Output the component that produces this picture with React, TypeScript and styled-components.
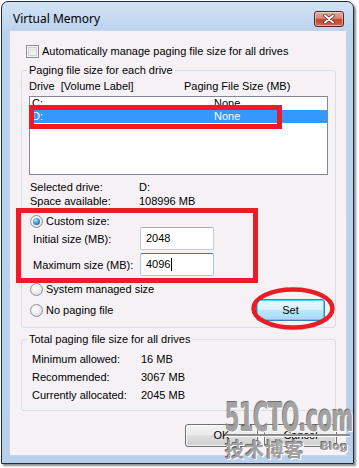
import React from 'react';
import styled, { createGlobalStyle, css } from 'styled-components';

const GlobalStyle = createGlobalStyle`
  html, body {
    margin: 0;
    padding: 0;
    background: #ffffff;
  }
  body {
    font-family: "Liberation Sans", Arial, sans-serif;
    font-size: 11px;
    color: #000000;
  }
`;

const Page = styled.div`
  position: relative;
  width: 359px;
  height: 468px;
  box-sizing: border-box;
  padding: 1px 0 0 1px;
  overflow: hidden;
  background: #ffffff;
`;

const Window = styled.div`
  width: 353px;
  height: 463px;
  box-sizing: border-box;
  border: 1px solid #1f2d3d;
  border-radius: 7px 7px 0 0;
  background: linear-gradient(to bottom, #d3e3f5 0px, #bcd3ee 28px, #b8d0ec 100%);
  box-shadow: 2px 2px 2px rgba(0, 0, 0, 0.45);
  display: flex;
  flex-direction: column;
  padding: 0 6px 7px 7px;
`;

const TitleBar = styled.div`
  height: 28px;
  display: flex;
  align-items: flex-start;
  justify-content: space-between;
  padding: 9px 3px 0 4px;
  box-sizing: border-box;
`;

const Title = styled.span`
  font-family: "Noto Sans", "Open Sans", sans-serif;
  font-size: 12px;
  line-height: 17px;
  margin-top: -1px;
  color: #000000;
`;

const CloseButton = styled.div`
  width: 30px;
  height: 16px;
  box-sizing: border-box;
  border: 1px solid #4e2320;
  border-radius: 3px;
  background: linear-gradient(to bottom, #e9a99c 0%, #d98676 45%, #c2412c 55%, #d06a52 100%);
  box-shadow: inset 0 0 0 1px rgba(255, 255, 255, 0.45);
  display: flex;
  align-items: center;
  justify-content: center;
`;

const Client = styled.div`
  flex: 1;
  background: #f5f1f5;
  border: 1px solid #c8d4e3;
  display: flex;
  flex-direction: column;
`;

const OptionRow = styled.label<{ $top: number; $left: number; $height?: number }>`
  ${({ $top, $left, $height = 13 }) => css`
    margin: ${$top}px 0 0 ${$left}px;
    height: ${$height}px;
  `}
  display: flex;
  align-items: center;
  gap: 3px;
  line-height: 13px;
`;

const CheckBox = styled.span`
  width: 13px;
  height: 13px;
  box-sizing: border-box;
  border: 1px solid #8e8f8f;
  background: linear-gradient(135deg, #dcdcdc 0%, #f4f4f4 70%, #ffffff 100%);
  box-shadow: inset 0 0 0 1px #f4f4f4, inset 0 0 0 2px #d2d2d2;
  flex-shrink: 0;
`;

const Radio = styled.span<{ $checked?: boolean }>`
  width: 13px;
  height: 13px;
  box-sizing: border-box;
  border-radius: 50%;
  border: 1px solid #8e8f8f;
  background: radial-gradient(circle at 40% 35%, #ffffff 0%, #e8e8e8 60%, #c8c8c8 100%);
  flex-shrink: 0;
  display: flex;
  align-items: center;
  justify-content: center;
  ${({ $checked }) =>
    $checked &&
    css`
      &::after {
        content: '';
        width: 7px;
        height: 7px;
        border-radius: 50%;
        background: radial-gradient(circle at 40% 35%, #b8e6ff 0%, #2b8ad6 55%, #0d4f8f 100%);
      }
    `}
`;

const Group = styled.fieldset<{ $top: number }>`
  ${({ $top }) => css`
    margin: ${$top}px 0 0 11px;
  `}
  width: 315px;
  box-sizing: border-box;
  min-inline-size: 0;
  border: 1px solid #d5dfe5;
  border-radius: 3px;
  padding: 0;
`;

const Legend = styled.legend`
  margin-left: 5px;
  padding: 0 2px;
  line-height: 13px;
  font-size: 11px;
`;

const GroupBody = styled.div<{ $pt: number; $pb: number }>`
  ${({ $pt, $pb }) => css`
    padding: ${$pt}px 0 ${$pb}px 0;
  `}
  display: flex;
  flex-direction: column;
`;

const HeaderRow = styled.div`
  margin: 3px 0 0 7px;
  height: 13px;
  line-height: 13px;
  display: grid;
  grid-template-columns: 155px 1fr;
`;

const ListBox = styled.div`
  margin: 3px 0 0 7px;
  width: 299px;
  height: 79px;
  box-sizing: border-box;
  border: 1px solid #828790;
  background: #ffffff;
`;

const ListRow = styled.div<{ $selected?: boolean }>`
  height: 13px;
  line-height: 13px;
  padding-left: 2px;
  display: grid;
  grid-template-columns: 182px 1fr;
  ${({ $selected }) =>
    $selected &&
    css`
      background: #3399ff;
      color: #ffffff;
    `}
`;

const InfoGrid = styled.div<{ $top: number; $left: number; $row: number; $col: number }>`
  ${({ $top, $left, $row, $col }) => css`
    margin: ${$top}px 0 0 ${$left}px;
    grid-template-columns: ${$col}px 1fr;
    grid-auto-rows: ${$row}px;
  `}
  display: grid;
  align-items: center;
  line-height: 13px;
`;

const SizeRow = styled.div<{ $top: number }>`
  ${({ $top }) => css`
    margin: ${$top}px 0 0 11px;
  `}
  display: grid;
  grid-template-columns: 107px 74px;
  align-items: center;
  height: 23px;
`;

const TextBox = styled.div<{ $focused?: boolean }>`
  height: 23px;
  box-sizing: border-box;
  border: 1px solid #c6c9cf;
  border-top-color: #abadb3;
  border-radius: 2px;
  background: #ffffff;
  padding: 0 5px;
  line-height: 21px;
  display: flex;
  align-items: center;
  ${({ $focused }) =>
    $focused &&
    css`
      border-color: #a3c9e6;
      border-top-color: #3d7bad;
    `}
`;

const Caret = styled.span`
  display: inline-block;
  width: 1px;
  height: 13px;
  background: #000000;
  margin-left: 1px;
`;

const SetRow = styled.div`
  margin: 3px 10px 0 8px;
  height: 22px;
  display: flex;
  align-items: center;
  justify-content: space-between;
`;

const Button = styled.div<{ $width: number; $height: number; $default?: boolean }>`
  ${({ $width, $height }) => css`
    width: ${$width}px;
    height: ${$height}px;
  `}
  box-sizing: border-box;
  border: 1px solid #707070;
  border-radius: 3px;
  background: linear-gradient(to bottom, #f2f2f2 0%, #ebebeb 49%, #dddddd 51%, #cfcfcf 100%);
  box-shadow: inset 0 0 0 1px rgba(255, 255, 255, 0.7);
  display: flex;
  align-items: center;
  justify-content: center;
  line-height: 13px;
  ${({ $default }) =>
    $default &&
    css`
      border-color: #3c7fb1;
      background: linear-gradient(to bottom, #eaf6fd 0%, #d9f0fc 49%, #bee6fd 51%, #a7d9f5 100%);
      box-shadow: inset 0 0 0 1px #48d8fb;
    `}
`;

const ButtonRow = styled.div`
  margin: 13px 0 0 175px;
  display: flex;
  gap: 6px;
`;

const RedBox = styled.div<{ $x: number; $y: number; $w: number; $h: number }>`
  ${({ $x, $y, $w, $h }) => css`
    left: ${$x}px;
    top: ${$y}px;
    width: ${$w}px;
    height: ${$h}px;
  `}
  position: absolute;
  box-sizing: border-box;
  border: 5px solid #ed1c24;
  pointer-events: none;
`;

const RedEllipse = styled.svg`
  position: absolute;
  left: 250px;
  top: 286px;
  pointer-events: none;
`;

const Watermark = styled.div`
  position: absolute;
  left: 225px;
  top: 400px;
  width: 125px;
  height: 64px;
  pointer-events: none;
  color: #a2a2a2;
`;

const MarkBig = styled.div`
  height: 34px;
  font-family: "DejaVu Sans Condensed", "DejaVu Sans", sans-serif;
  font-weight: bold;
  font-size: 39px;
  line-height: 36px;
  white-space: nowrap;
  transform: scaleX(0.6);
  transform-origin: left top;
  letter-spacing: -1px;
  text-shadow: 1px 1px 0 #ffffff, -1px -1px 0 #6e6e6e;
`;

const MarkLine = styled.div`
  height: 2px;
  background: #8c8c8c;
  border-bottom: 1px solid #ffffff;
`;

const MarkBottom = styled.div`
  display: flex;
  align-items: flex-start;
  justify-content: space-between;
  margin-top: 1px;
`;

const MarkCjk = styled.span`
  font-family: "Noto Sans CJK SC", sans-serif;
  font-weight: bold;
  font-size: 19px;
  line-height: 21px;
  letter-spacing: 1px;
  text-shadow: 1px 1px 0 #ffffff, -1px -1px 0 #6e6e6e;
`;

const MarkBlog = styled.span`
  font-family: "DejaVu Sans", sans-serif;
  font-weight: bold;
  font-size: 11px;
  line-height: 12px;
  margin-top: 3px;
  margin-right: 2px;
  text-shadow: 1px 1px 0 #ffffff, -1px -1px 0 #6e6e6e;
`;

export default function App() {
  return (
    <>
      <GlobalStyle />
      <Page>
        <Window>
          <TitleBar>
            <Title>Virtual Memory</Title>
            <CloseButton>
              <svg width="12" height="10" viewBox="0 0 12 10">
                <path
                  d="M2 1.5 L10 8.5 M10 1.5 L2 8.5"
                  stroke="#5a2a22"
                  strokeWidth="3.4"
                  strokeLinecap="round"
                />
                <path
                  d="M2 1.5 L10 8.5 M10 1.5 L2 8.5"
                  stroke="#ffffff"
                  strokeWidth="2"
                  strokeLinecap="round"
                />
              </svg>
            </CloseButton>
          </TitleBar>
          <Client>
            <OptionRow $top={14} $left={16}>
              <CheckBox />
              Automatically manage paging file size for all drives
            </OptionRow>

            <Group $top={6}>
              <Legend>Paging file size for each drive</Legend>
              <GroupBody $pt={0} $pb={6}>
                <HeaderRow>
                  <span>Drive&nbsp; [Volume Label]</span>
                  <span>Paging File Size (MB)</span>
                </HeaderRow>
                <ListBox>
                  <ListRow>
                    <span>C:</span>
                    <span>None</span>
                  </ListRow>
                  <ListRow $selected>
                    <span>D:</span>
                    <span>None</span>
                  </ListRow>
                </ListBox>
                <InfoGrid $top={5} $left={8} $row={14} $col={109}>
                  <span>Selected drive:</span>
                  <span>D:</span>
                  <span>Space available:</span>
                  <span>108996 MB</span>
                </InfoGrid>
                <OptionRow $top={7} $left={8} $height={12}>
                  <Radio $checked />
                  Custom size:
                </OptionRow>
                <SizeRow $top={0}>
                  <span>Initial size (MB):</span>
                  <TextBox>2048</TextBox>
                </SizeRow>
                <SizeRow $top={3}>
                  <span>Maximum size (MB):</span>
                  <TextBox $focused>
                    4096
                    <Caret />
                  </TextBox>
                </SizeRow>
                <OptionRow $top={7} $left={8}>
                  <Radio />
                  System managed size
                </OptionRow>
                <SetRow>
                  <OptionRow $top={0} $left={0}>
                    <Radio />
                    No paging file
                  </OptionRow>
                  <Button $width={69} $height={22} $default>
                    Set
                  </Button>
                </SetRow>
              </GroupBody>
            </Group>

            <Group $top={5}>
              <Legend>Total paging file size for all drives</Legend>
              <GroupBody $pt={4} $pb={6}>
                <InfoGrid $top={0} $left={10} $row={18} $col={109}>
                  <span>Minimum allowed:</span>
                  <span>16 MB</span>
                  <span>Recommended:</span>
                  <span>3067 MB</span>
                  <span>Currently allocated:</span>
                  <span>2045 MB</span>
                </InfoGrid>
              </GroupBody>
            </Group>

            <ButtonRow>
              <Button $width={73} $height={23}>
                OK
              </Button>
              <Button $width={73} $height={23}>
                Cancel
              </Button>
            </ButtonRow>
          </Client>
        </Window>

        <RedBox $x={29} $y={105} $w={253} $h={24} />
        <RedBox $x={16} $y={208} $w={242} $h={75} />
        <RedEllipse width="86" height="46" viewBox="0 0 86 46">
          <ellipse cx="43" cy="22.5" rx="39.5" ry="19" fill="none" stroke="#ed1c24" strokeWidth="4.5" />
        </RedEllipse>

        <Watermark>
          <MarkBig>51CTO.com</MarkBig>
          <MarkLine />
          <MarkBottom>
            <MarkCjk>技术博客</MarkCjk>
            <MarkBlog>Blog</MarkBlog>
          </MarkBottom>
        </Watermark>
      </Page>
    </>
  );
}
